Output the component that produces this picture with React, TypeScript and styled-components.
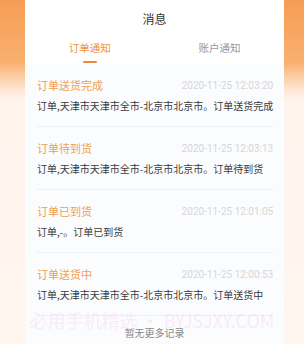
import React, { useState } from 'react';
import styled, { createGlobalStyle } from 'styled-components';

const GlobalStyle = createGlobalStyle`
  html, body {
    margin: 0;
    padding: 0;
    width: 304px;
    height: 344px;
    overflow: hidden;
    background: #fff6f0;
    font-family: "Noto Sans CJK SC", "Noto Sans", sans-serif;
  }
`;

const Page = styled.div`
  position: relative;
  display: flex;
  width: 304px;
  height: 344px;
`;

const Side = styled.div<{ $w: number }>`
  width: ${(p) => p.$w}px;
  flex-shrink: 0;
  background: linear-gradient(
    to bottom,
    #f69d55 0,
    #f9b06e 62px,
    #fde3cf 88px,
    #fff4ec 100px,
    #fff6f0 100%
  );
`;

const Panel = styled.div`
  flex: 1;
  display: flex;
  flex-direction: column;
  background: #fbfcfe;
`;

const Header = styled.div`
  height: 64px;
  background: #fff;
  display: flex;
  flex-direction: column;
`;

const HeaderTitle = styled.div`
  height: 38px;
  line-height: 38px;
  text-align: center;
  font-size: 12px;
  color: #333;
`;

const Tabs = styled.div`
  display: flex;
`;

const Tab = styled.div<{ $active: boolean }>`
  flex: 1;
  display: flex;
  flex-direction: column;
  align-items: center;
  font-size: 10.5px;
  line-height: 20px;
  color: ${(p) => (p.$active ? '#ef9141' : '#9a9a9a')};
  cursor: pointer;

  &::after {
    content: '';
    margin-top: 3px;
    width: 14px;
    height: 2px;
    border-radius: 1px;
    background: ${(p) => (p.$active ? '#ef8a33' : 'transparent')};
  }
`;

const List = styled.div`
  display: flex;
  flex-direction: column;
`;

const Item = styled.div`
  margin: 0 11px 0 12px;
  padding: 13px 0 12px;
  border-bottom: 1px solid #eef1f4;
  display: flex;
  flex-direction: column;
  gap: 5px;
`;

const ItemHead = styled.div`
  display: flex;
  justify-content: space-between;
  align-items: center;
  height: 16px;
`;

const ItemTitle = styled.span`
  font-size: 11px;
  color: #ee9f52;
`;

const ItemDate = styled.span`
  font-size: 10px;
  color: #d6d6d6;
  font-family: "Roboto", "Noto Sans", sans-serif;
`;

const ItemBody = styled.div`
  font-size: 10px;
  line-height: 16px;
  color: #3a3a3a;
  white-space: nowrap;
`;

const Footer = styled.div`
  padding-top: 9px;
  text-align: center;
  font-size: 10px;
  color: #888;
`;

const Watermark = styled.div`
  position: absolute;
  left: 0;
  right: 0;
  top: 307px;
  text-align: center;
  font-size: 18px;
  line-height: 26px;
  color: rgba(244, 200, 240, 0.35);
  pointer-events: none;
`;

const items = [
  {
    title: '订单送货完成',
    date: '2020-11-25 12:03:20',
    body: '订单,天津市天津市全市-北京市北京市。订单送货完成',
  },
  {
    title: '订单待到货',
    date: '2020-11-25 12:03:13',
    body: '订单,天津市天津市全市-北京市北京市。订单待到货',
  },
  {
    title: '订单已到货',
    date: '2020-11-25 12:01:05',
    body: '订单,-。订单已到货',
  },
  {
    title: '订单送货中',
    date: '2020-11-25 12:00:53',
    body: '订单,天津市天津市全市-北京市北京市。订单送货中',
  },
];

export default function App() {
  const [tab, setTab] = useState(0);

  return (
    <>
      <GlobalStyle />
      <Page>
        <Side $w={25} />
        <Panel>
          <Header>
            <HeaderTitle>消息</HeaderTitle>
            <Tabs>
              <Tab $active={tab === 0} onClick={() => setTab(0)}>
                订单通知
              </Tab>
              <Tab $active={tab === 1} onClick={() => setTab(1)}>
                账户通知
              </Tab>
            </Tabs>
          </Header>
          <List>
            {items.map((item) => (
              <Item key={item.date}>
                <ItemHead>
                  <ItemTitle>{item.title}</ItemTitle>
                  <ItemDate>{item.date}</ItemDate>
                </ItemHead>
                <ItemBody>{item.body}</ItemBody>
              </Item>
            ))}
          </List>
          <Footer>暂无更多记录</Footer>
        </Panel>
        <Side $w={20} />
        <Watermark>必用手机精选 • BYJSJXY.COM</Watermark>
      </Page>
    </>
  );
}
